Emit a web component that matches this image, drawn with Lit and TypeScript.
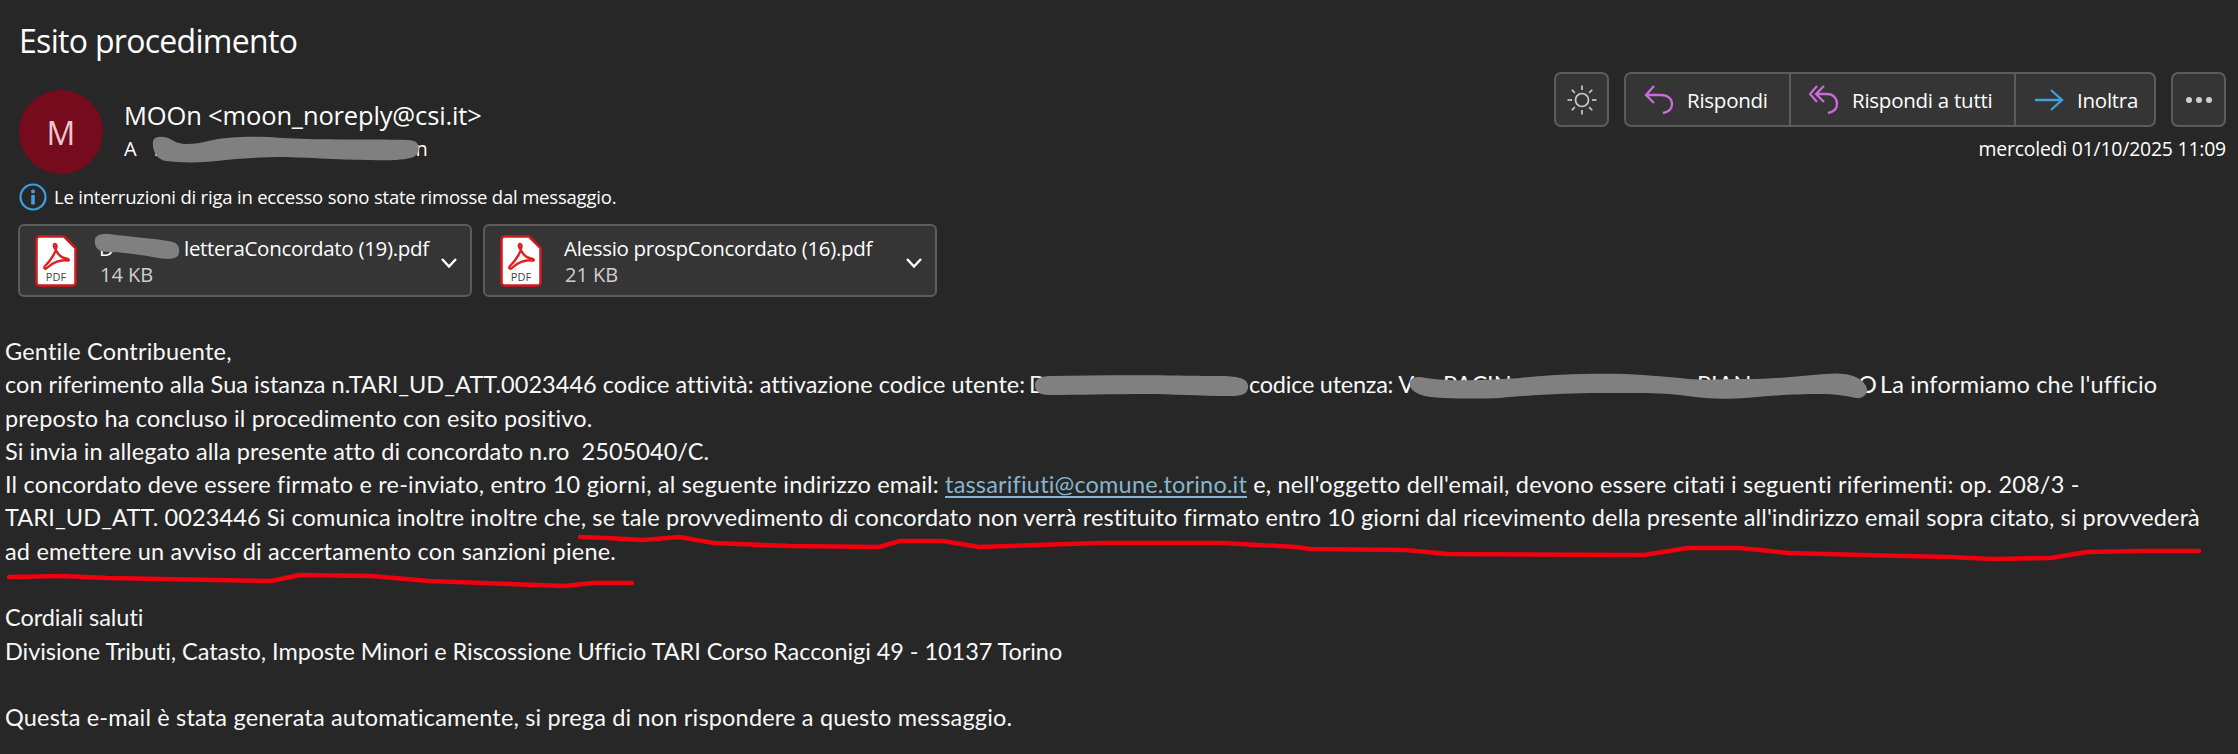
import { LitElement, css, html, svg } from "lit";
import { customElement } from "lit/decorators.js";

type Seg = { t: string; w: number; ls?: number };

// second body line: the blanks sit under the scribbles of the screenshot
const redactedLine: Seg[] = [
  { t: "con riferimento alla Sua istanza n.TARI_UD_ATT.0023446 codice attività: attivazione codice utente:", w: 1024, ls: 0.03 },
  { t: "D", w: 220 },
  { t: "codice utenza: V", w: 194, ls: -0.25 },
  { t: "PACIN", w: 254 },
  { t: "PIAN", w: 161 },
  { t: "O", w: 22 },
  { t: "La informiamo che l'ufficio", w: 280, ls: 0.2 },
];

const scribbles = [
  "M153 141C155 135 166 136 174 141C182 146 196 144 208 141C228 136 262 136 282 138C312 140 360 139 408 140C418 140 420 146 418 152C416 158 408 159 396 160C360 161 320 158 286 157C262 157 244 158 226 160C204 163 182 163 166 161C156 159 152 150 153 141Z",
  "M95 240C95 234 104 233 116 235C132 237 150 238 168 241C178 242 180 247 179 253C178 259 170 260 158 258C142 255 124 252 108 252C98 252 94 247 95 240Z",
  "M1035 385C1035 378 1042 376 1052 376C1100 375 1160 375 1205 376C1228 376 1246 375 1248 385C1249 394 1242 396 1230 396C1200 396 1170 394 1148 394C1110 394 1076 395 1050 395C1040 395 1035 392 1035 385Z",
  "M1410 382C1411 377 1418 376 1426 378C1450 382 1490 380 1520 378C1545 375 1590 373 1625 374C1650 375 1665 377 1680 378C1700 381 1720 379 1745 379C1775 379 1800 376 1825 374C1845 372 1860 375 1866 386C1870 394 1862 399 1856 398C1846 396 1836 394 1820 394C1790 394 1770 396 1745 398C1725 400 1700 398 1680 395C1660 393 1640 393 1600 393C1570 393 1530 395 1500 398C1480 399 1440 399 1425 396C1414 393 1409 389 1410 382Z",
];

const redLines = [
  "M580 537L607 538L643 540L679 537L714 543L790 546L879 547L900 541L943 541L979 547L1036 545L1100 543L1223 543L1296 547L1310 549L1405 550L1448 554L1644 555L1688 548L1739 548L1789 553L1862 555L1949 557L1993 559L2051 558L2087 552L2140 551L2199 551",
  "M9 577L64 576L107 578L271 581L300 575L371 576L429 581L564 586L593 583L632 583",
];

@customElement("app-root")
export class AppRoot extends LitElement {
  static styles = css`
    :host {
      display: block;
      position: relative;
      width: 2238px;
      height: 754px;
      overflow: hidden;
      background: #272727;
      color: #fff;
      font-family: "Open Sans", sans-serif;
    }
    .head {
      display: flex;
      justify-content: space-between;
      align-items: flex-start;
    }
    .left {
      padding-left: 18px;
    }
    h1 {
      margin: 0 0 29px;
      padding: 21px 0 0 1px;
      font-size: 32px;
      line-height: 40px;
      font-weight: 400;
      letter-spacing: -0.7px;
    }
    .sender {
      display: flex;
    }
    .avatar {
      width: 84px;
      height: 84px;
      margin-left: 1px;
      border-radius: 50%;
      background: #750b1c;
      color: #e9c7cd;
      font-size: 32px;
      display: flex;
      align-items: center;
      justify-content: center;
    }
    .who {
      margin-left: 21px;
      padding-top: 9px;
    }
    .from {
      font-size: 25.5px;
      line-height: 32px;
      letter-spacing: -0.15px;
    }
    .to {
      margin-top: 5px;
      font-size: 20px;
      line-height: 26px;
      display: flex;
    }
    .to .addr {
      width: 274px;
      margin-left: 17px;
      display: flex;
      justify-content: space-between;
    }
    .info {
      display: flex;
      align-items: center;
      gap: 7px;
      margin: 9px 0 14px 1px;
      height: 27px;
      font-size: 18.5px;
      letter-spacing: -0.2px;
    }
    .info svg {
      flex: none;
    }
    .files {
      display: flex;
      gap: 11px;
    }
    .file {
      box-sizing: border-box;
      width: 454px;
      height: 73px;
      display: flex;
      padding: 9px 12px 0 15px;
      border: 2px solid #5c5c5c;
      border-radius: 6px;
      background: #353535;
    }
    .file .meta {
      flex: 1;
      margin-left: 22px;
    }
    .name {
      font-size: 20.5px;
      line-height: 26px;
      letter-spacing: -0.3px;
      white-space: nowrap;
      display: flex;
    }
    .name .hidden {
      width: 85px;
    }
    .size {
      padding-left: 1px;
      color: #cfcfcf;
      font-size: 20px;
      line-height: 28px;
    }
    .chev {
      margin-top: 22px;
    }
    .right {
      padding: 72px 12px 0 0;
      display: flex;
      flex-direction: column;
      align-items: flex-end;
    }
    .tools {
      display: flex;
      gap: 15px;
    }
    .tool {
      box-sizing: border-box;
      width: 55px;
      height: 55px;
      display: flex;
      align-items: center;
      justify-content: center;
      border: 2px solid #5c5c5c;
      border-radius: 7px;
      background: #353535;
    }
    .group {
      display: flex;
      height: 55px;
      box-sizing: border-box;
      border: 2px solid #5c5c5c;
      border-radius: 7px;
      background: #353535;
    }
    .act {
      box-sizing: border-box;
      display: flex;
      align-items: center;
      gap: 13px;
      padding-left: 18px;
      font-size: 20.5px;
      letter-spacing: -0.25px;
      border-left: 2px solid #5c5c5c;
    }
    .act:first-child {
      border-left: 0;
    }
    .date {
      margin-top: 10px;
      font-size: 19.4px;
      line-height: 24px;
      letter-spacing: -0.2px;
    }
    .mail {
      margin-top: 38px;
      padding-left: 5px;
      font-family: Lato, sans-serif;
      font-size: 23.5px;
      line-height: 33.3px;
      color: #f8f8f8;
    }
    .line {
      height: 33.3px;
      display: flex;
      white-space: pre;
    }
    .seg {
      flex: none;
    }
    a {
      color: #86b5cc;
      text-decoration: underline;
      text-decoration-thickness: 2px;
      text-underline-offset: 3px;
    }
    .marks {
      position: absolute;
      left: 0;
      top: 0;
      pointer-events: none;
    }
  `;

  private pdfIcon() {
    return html`<svg width="42" height="52" viewBox="0 0 42 52">
      <path d="M4 1.500H29L40.500 13V47A3 3 0 0 1 37.500 50.500H4A3 3 0 0 1 1.500 47V4.500A3 3 0 0 1 4 1.500Z" fill="#fff" stroke="#d3181c" stroke-width="2.500" />
      <path d="M19 11.500C18 8 22 8 21.500 12C21 17 16 25 10.500 30.500C8 33 10 35 12.500 32.500C17 28 25 24.500 32 25.500C35 26 34 23.500 31 23.500C26 23.500 21 17 19 11.500Z" fill="none" stroke="#e0201f" stroke-width="2.400" />
      <text x="21" y="46" text-anchor="middle" font-size="11" fill="#444" font-family="Open Sans">PDF</text>
    </svg>`;
  }

  private chevron() {
    return html`<svg class="chev" width="18" height="12" viewBox="0 0 18 12">
      <path d="M2 2L9 9.500L16 2" fill="none" stroke="#fff" stroke-width="2.400" />
    </svg>`;
  }

  private sunIcon() {
    const rays = [0, 45, 90, 135, 180, 225, 270, 315];
    return html`<svg width="30" height="32" viewBox="-15 -16 30 32" fill="none" stroke="#c9c9c9" stroke-width="1.700">
      <circle r="6.500" />
      ${rays.map((a) => svg`<line x1="0" y1="-10" x2="0" y2="-14.500" transform="rotate(${a})" />`)}
    </svg>`;
  }

  // Lato runs a little off the original face, so each line carries its own tracking
  private line(content: unknown, ls = 0) {
    return html`<div class="line" style="letter-spacing:${ls}px"><span>${content}</span></div>`;
  }

  render() {
    return html`
      <div class="head">
        <div class="left">
          <h1>Esito procedimento</h1>
          <div class="sender">
            <div class="avatar">M</div>
            <div class="who">
              <div class="from">MOOn &lt;moon_noreply@csi.it&gt;</div>
              <div class="to">
                <span>A</span>
                <span class="addr"><span>r</span><span>n</span></span>
              </div>
            </div>
          </div>
          <div class="info">
            <svg width="28" height="28" viewBox="0 0 28 28">
              <circle cx="14" cy="14" r="12.500" fill="none" stroke="#3f9fdc" stroke-width="2.200" />
              <circle cx="14" cy="8.500" r="2" fill="#3f9fdc" />
              <rect x="12.200" y="12" width="3.600" height="9.500" fill="#3f9fdc" />
            </svg>
            <span>Le interruzioni di riga in eccesso sono state rimosse dal messaggio.</span>
          </div>
          <div class="files">
            <div class="file">
              ${this.pdfIcon()}
              <div class="meta">
                <div class="name"><span class="hidden">D</span><span>letteraConcordato (19).pdf</span></div>
                <div class="size">14 KB</div>
              </div>
              ${this.chevron()}
            </div>
            <div class="file">
              ${this.pdfIcon()}
              <div class="meta">
                <div class="name">Alessio prospConcordato (16).pdf</div>
                <div class="size">21 KB</div>
              </div>
              ${this.chevron()}
            </div>
          </div>
        </div>
        <div class="right">
          <div class="tools">
            <div class="tool">${this.sunIcon()}</div>
            <div class="group">
              <div class="act" style="width:163px">
                <svg width="30" height="30" viewBox="0 0 30 30" fill="none" stroke="#c86dd7" stroke-width="2.300">
                  <path d="M10 1L2 10L10 18M2 10H17C24 10 28 14 28 19C28 24 24 27 19 28" />
                </svg>
                Rispondi
              </div>
              <div class="act" style="width:225px">
                <svg width="30" height="30" viewBox="0 0 30 30" fill="none" stroke="#c86dd7" stroke-width="2.300">
                  <path d="M8 1L1 9L8 17M15 1L7 9L15 17M7 9H18C24 9 28 13 28 19C28 24 24 27 19 28" />
                </svg>
                Rispondi a tutti
              </div>
              <div class="act" style="width:140px">
                <svg width="30" height="24" viewBox="0 0 30 24" fill="none" stroke="#3f9fdc" stroke-width="2.300">
                  <path d="M1 12H27M17 2L28 12L17 22" />
                </svg>
                Inoltra
              </div>
            </div>
            <div class="tool">
              <svg width="30" height="8" viewBox="0 0 30 8" fill="#cfcfcf">
                <circle cx="5" cy="4" r="3" /><circle cx="15" cy="4" r="3" /><circle cx="25" cy="4" r="3" />
              </svg>
            </div>
          </div>
          <div class="date">mercoledì 01/10/2025 11:09</div>
        </div>
      </div>

      <div class="mail">
        ${this.line("Gentile Contribuente,", 0.2)}
        <div class="line">${redactedLine.map((s) => html`<span class="seg" style="width:${s.w}px;letter-spacing:${s.ls ?? 0}px">${s.t}</span>`)}</div>
        ${this.line("preposto ha concluso il procedimento con esito positivo.", 0.16)}
        ${this.line("Si invia in allegato alla presente atto di concordato n.ro  2505040/C.", 0.06)}
        ${this.line(html`Il concordato deve essere firmato e re-inviato, entro 10 giorni, al seguente indirizzo email: <a>tassarifiuti@comune.torino.it</a> e, nell'oggetto dell'email, devono essere citati i seguenti riferimenti: op. 208/3 -`, 0.18)}
        ${this.line("TARI_UD_ATT. 0023446 Si comunica inoltre inoltre che, se tale provvedimento di concordato non verrà restituito firmato entro 10 giorni dal ricevimento della presente all'indirizzo email sopra citato, si provvederà", 0.11)}
        ${this.line("ad emettere un avviso di accertamento con sanzioni piene.", 0.18)}
        <div class="line"></div>
        ${this.line("Cordiali saluti", -0.05)}
        ${this.line("Divisione Tributi, Catasto, Imposte Minori e Riscossione Ufficio TARI Corso Racconigi 49 - 10137 Torino", -0.06)}
        <div class="line"></div>
        ${this.line("Questa e-mail è stata generata automaticamente, si prega di non rispondere a questo messaggio.", 0.18)}
      </div>

      <svg class="marks" width="2238" height="754" viewBox="0 0 2238 754">
        ${scribbles.map((d) => svg`<path d=${d} fill="#808080" />`)}
        ${redLines.map((d) => svg`<path d=${d} fill="none" stroke="#f0000f" stroke-width="4.500" stroke-linejoin="round" stroke-linecap="round" />`)}
      </svg>
    `;
  }
}
